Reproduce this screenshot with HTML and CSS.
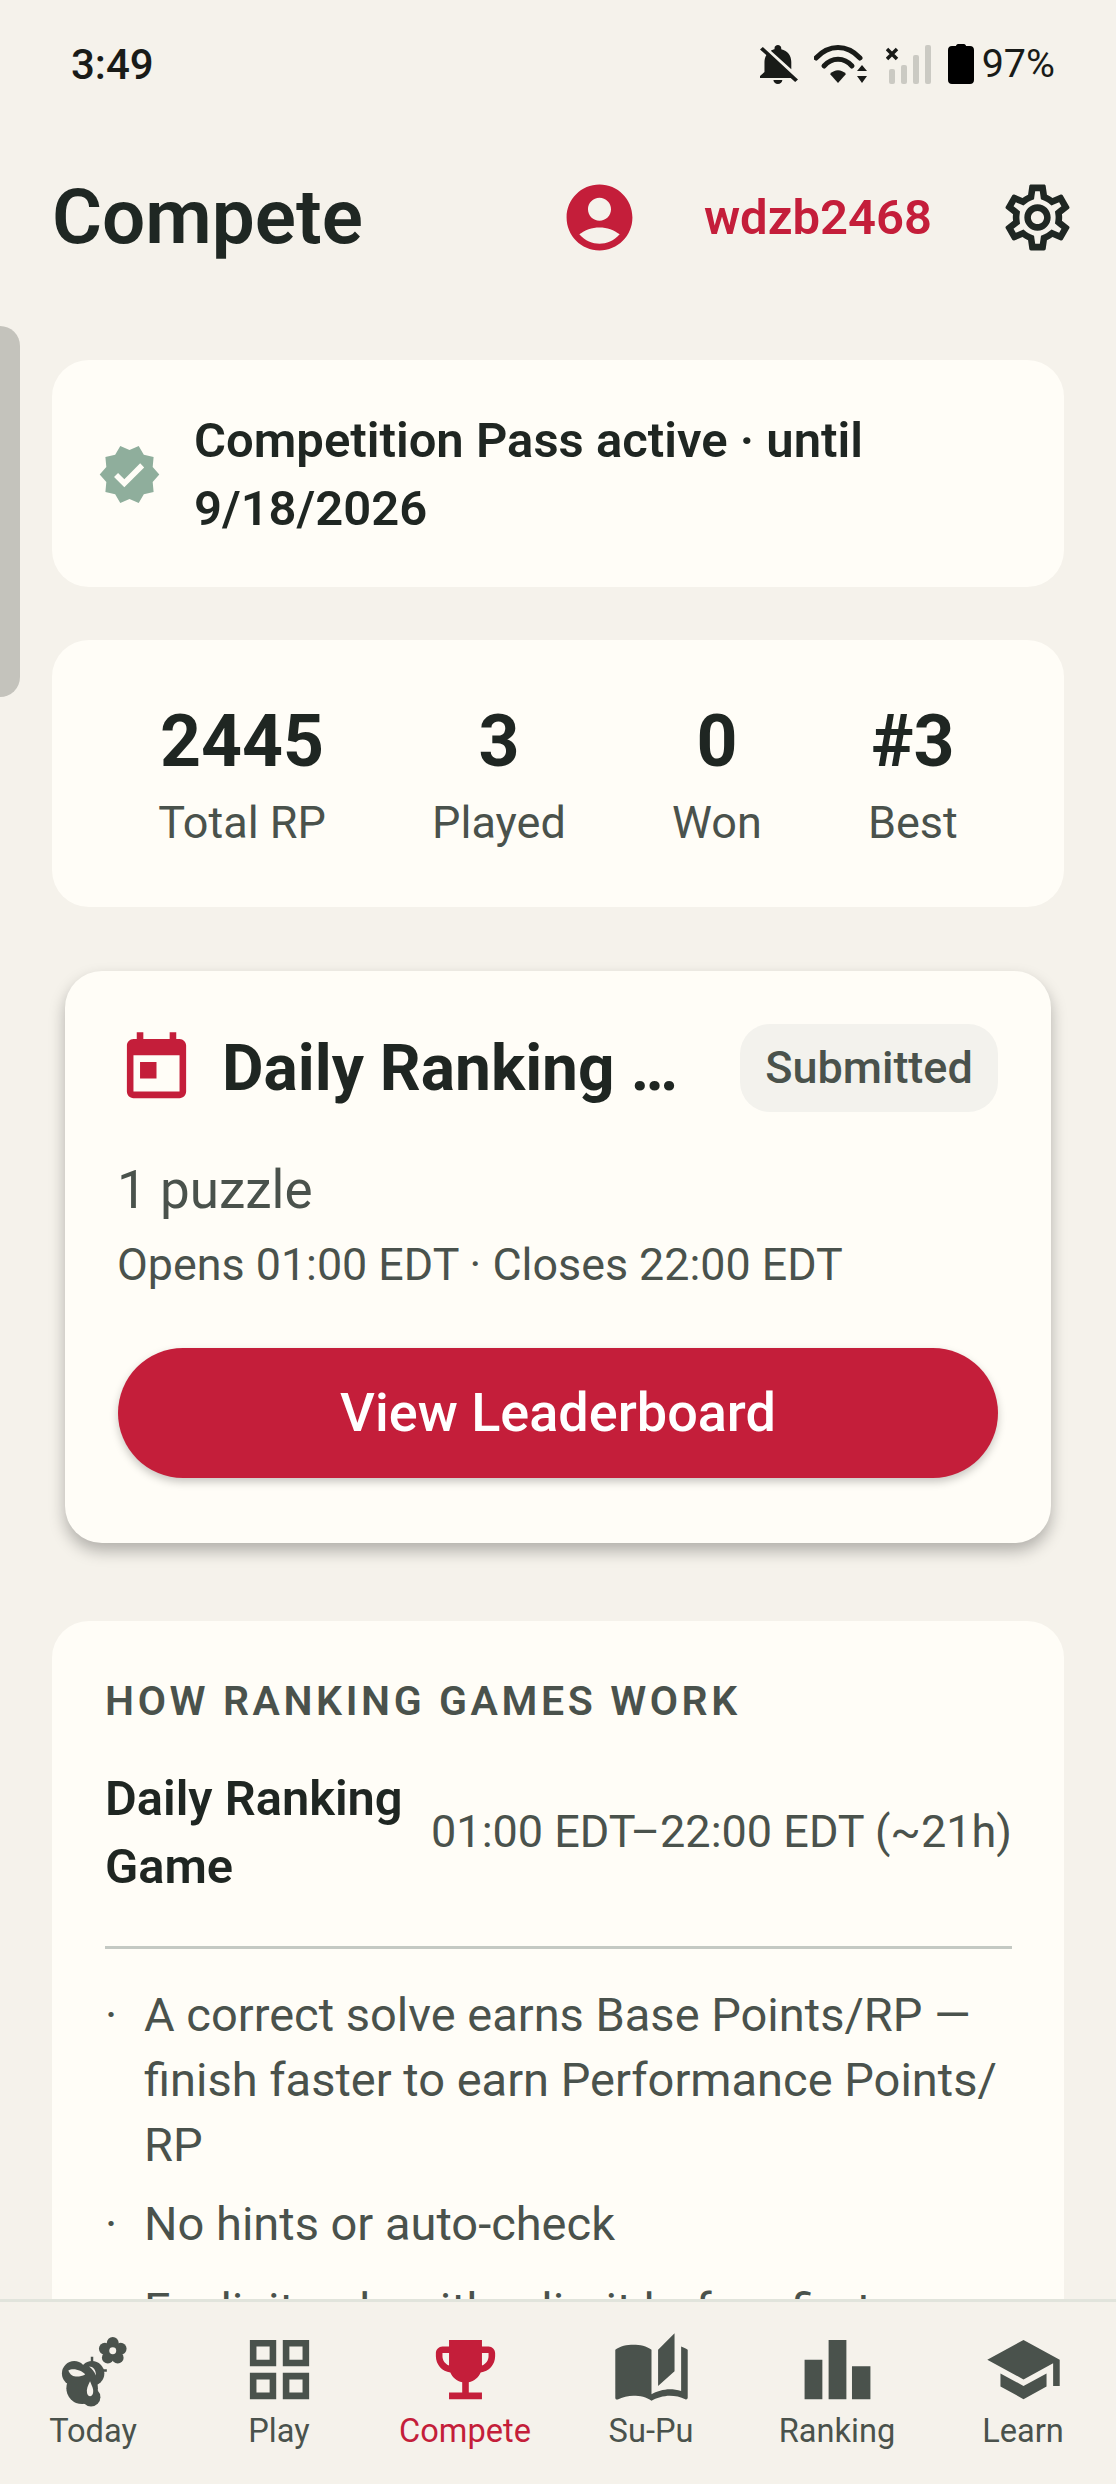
FILE: index.html
```html
<!DOCTYPE html>
<html>
<head lang="en">
    <meta charset="UTF-8">
    <title>Compete</title>
    <link rel="stylesheet" href="styles.css">
</head>
<body>
<div class="status-bar">
    <span class="clock">3:49</span>
    <div class="status-icons">
        <svg class="ic-bell" viewBox="4 2.500 17 19.500" preserveAspectRatio="none"><path d="M20 18.69L7.84 6.14 5.27 3.49 4 4.76l2.8 2.8v.01c-.52.99-.8 2.16-.8 3.42v5l-2 2v1h13.73l2 2L21 19.72l-1-1.03zM12 22c1.11 0 2-.89 2-2h-4c0 1.11.89 2 2 2zm6-7.32V11c0-3.08-1.64-5.64-4.5-6.32V4c0-.83-.67-1.5-1.5-1.5s-1.5.67-1.5 1.5v.68c-.15.03-.29.08-.42.12-.1.03-.2.07-.3.11h-.01c-.2.08-.4.17-.59.27-.11.05-.22.11-.33.18L18 14.68z"/></svg>
        <svg class="ic-wifi" viewBox="0 0 54 39">
            <path class="arc" d="M2 13C15 -1 33 -1 46 13"/>
            <path class="arc" d="M10 21C18 12 30 12 38 21"/>
            <path d="M16 29C21 24 27 24 32 29L24 38Z"/>
            <path d="M48 20L53 26H43ZM48 38L43 31H53Z"/>
        </svg>
        <svg class="ic-signal" viewBox="0 0 45 39">
            <path class="cross" d="M1 4L11 14M11 4L1 14"/>
            <rect class="bar" x="3" y="24" width="6" height="15" rx="2"/>
            <rect class="bar" x="15" y="20" width="6" height="19" rx="2"/>
            <rect class="bar" x="27" y="10" width="6" height="29" rx="2"/>
            <rect class="bar" x="39" y="0" width="6" height="39" rx="2"/>
        </svg>
        <svg class="ic-battery" viewBox="0 0 26 40"><path d="M8 2C8 1 9 0 10 0H16C17 0 18 1 18 2H22C24.500 2 26 3.500 26 6V36C26 38.500 24.500 40 22 40H4C1.500 40 0 38.500 0 36V6C0 3.500 1.500 2 4 2Z"/></svg>
        <span class="battery-text">97%</span>
    </div>
</div>

<div class="header">
    <h1 class="title">Compete</h1>
    <svg class="ic-account" viewBox="0 0 24 24"><path d="M12 2C6.48 2 2 6.48 2 12s4.48 10 10 10 10-4.48 10-10S17.52 2 12 2zm0 4c1.93 0 3.5 1.57 3.5 3.5S13.93 13 12 13s-3.5-1.57-3.5-3.5S10.07 6 12 6zm0 14c-2.03 0-4.43-.82-6.14-2.88C7.55 15.8 9.68 15 12 15s4.45.8 6.14 2.12C16.43 19.18 14.03 20 12 20z"/></svg>
    <span class="username">wdzb2468</span>
    <svg class="ic-settings" viewBox="0 0 24 24"><path d="M19.43 12.98c.04-.32.07-.64.07-.98 0-.34-.03-.66-.07-.98l2.11-1.65c.19-.15.24-.42.12-.64l-2-3.46c-.09-.16-.26-.25-.44-.25-.06 0-.12.01-.17.03l-2.49 1c-.52-.4-1.08-.73-1.69-.98l-.38-2.65C14.46 2.18 14.25 2 14 2h-4c-.25 0-.46.18-.49.42l-.38 2.65c-.61.25-1.17.59-1.69.98l-2.49-1c-.06-.02-.12-.03-.18-.03-.17 0-.34.09-.43.25l-2 3.46c-.13.22-.07.49.12.64l2.11 1.65c-.04.32-.07.65-.07.98 0 .33.03.66.07.98l-2.11 1.65c-.19.15-.24.42-.12.64l2 3.46c.09.16.26.25.44.25.06 0 .12-.01.17-.03l2.49-1c.52.4 1.08.73 1.69.98l.38 2.65c.03.24.24.42.49.42h4c.25 0 .46-.18.49-.42l.38-2.65c.61-.25 1.17-.59 1.69-.98l2.49 1c.06.02.12.03.18.03.17 0 .34-.09.43-.25l2-3.46c.12-.22.07-.49-.12-.64l-2.11-1.65zm-1.98-1.71c.04.31.05.52.05.73 0 .21-.02.43-.05.73l-.14 1.13.89.7 1.08.84-.7 1.21-1.27-.51-1.04-.42-.9.68c-.43.32-.84.56-1.25.73l-1.06.43-.16 1.13-.2 1.35h-1.4l-.19-1.35-.16-1.13-1.06-.43c-.43-.18-.83-.41-1.23-.71l-.91-.7-1.06.43-1.27.51-.7-1.21 1.08-.84.89-.7-.14-1.13c-.03-.31-.05-.54-.05-.74s.02-.43.05-.73l.14-1.13-.89-.7-1.08-.84.7-1.21 1.27.51 1.04.42.9-.68c.43-.32.84-.56 1.25-.73l1.06-.43.16-1.13.2-1.35h1.39l.19 1.35.16 1.13 1.06.43c.43.18.83.41 1.23.71l.91.7 1.06-.43 1.27-.51.7 1.21-1.07.85-.89.7.14 1.13zM12 8c-2.21 0-4 1.79-4 4s1.79 4 4 4 4-1.79 4-4-1.79-4-4-4zm0 6c-1.1 0-2-.9-2-2s.9-2 2-2 2 .9 2 2-.9 2-2 2z"/></svg>
</div>

<div class="content">
    <div class="scroll-handle"></div>

    <div class="card pass-card">
        <svg class="ic-verified" viewBox="0 0 24 24"><path d="M23 12l-2.44-2.79.34-3.69-3.61-.82-1.89-3.2L12 2.96 8.6 1.5 6.71 4.69 3.1 5.5l.34 3.7L1 12l2.44 2.79-.34 3.7 3.61.82L8.6 22.5l3.4-1.47 3.4 1.46 1.89-3.19 3.61-.82-.34-3.69L23 12zm-12.91 4.72l-3.8-3.81 1.48-1.48 2.32 2.33 5.85-5.87 1.48 1.48-7.33 7.35z"/></svg>
        <div class="pass-text">Competition Pass active · until 9/18/2026</div>
    </div>

    <div class="card stats-card">
        <div class="stat"><div class="stat-num">2445</div><div class="stat-label">Total RP</div></div>
        <div class="stat"><div class="stat-num">3</div><div class="stat-label">Played</div></div>
        <div class="stat"><div class="stat-num">0</div><div class="stat-label">Won</div></div>
        <div class="stat"><div class="stat-num">#3</div><div class="stat-label">Best</div></div>
    </div>

    <div class="card daily-card">
        <div class="daily-head">
            <svg class="ic-today" viewBox="0 0 24 24"><path d="M19 3h-1V1h-2v2H8V1H6v2H5c-1.11 0-1.99.9-1.99 2L3 19c0 1.1.89 2 2 2h14c1.1 0 2-.9 2-2V5c0-1.1-.9-2-2-2zm0 16H5V8h14v11zM7 10h5v5H7z"/></svg>
            <div class="daily-title">Daily Ranking Game</div>
            <span class="pill">Submitted</span>
        </div>
        <div class="puzzle-count">1 puzzle</div>
        <div class="daily-hours">Opens 01:00 EDT · Closes 22:00 EDT</div>
        <div class="btn-primary">View Leaderboard</div>
    </div>

    <div class="card how-card">
        <div class="how-title">HOW RANKING GAMES WORK</div>
        <div class="how-row">
            <div class="how-name">Daily Ranking Game</div>
            <div class="how-time">01:00 EDT–22:00 EDT (~21h)</div>
        </div>
        <ul class="how-list">
            <li><span class="dot">·</span><span>A correct solve earns Base Points/RP — finish faster to earn Performance Points/<br>RP</span></li>
            <li class="gap-after"><span class="dot">·</span><span>No hints or auto-check</span></li>
            <li><span class="dot">·</span><span>Explicit only with a limit before first</span></li>
        </ul>
    </div>
</div>

<div class="tabbar">
    <div class="tab">
        <svg class="tab-bee" viewBox="0 0 85 80">
            <circle cx="62" cy="13" r="6"/><circle cx="70" cy="19" r="6"/><circle cx="67" cy="28" r="6"/><circle cx="57" cy="28" r="6"/><circle cx="54" cy="19" r="6"/>
            <circle cx="62" cy="21" r="6"/>
            <circle class="hole" cx="62" cy="21" r="3.500"/>
            <path class="feeler" d="M41 27V33M49 41H56"/>
            <circle cx="23" cy="44" r="12.500"/><circle cx="41" cy="44" r="12.500"/><circle cx="31" cy="59" r="16"/><circle cx="40" cy="68" r="9.500"/>
            <path class="hole" d="M17 41C22 38 31 41 34 45C28 48 20 49 17 41Z"/>
            <path class="hole" d="M39 52C41 57 43 60 42 64C41 68 37 68 36 64C35 60 37 56 39 52Z"/>
            <path class="hole" d="M38 37C42 37 45 40 45 46C43 42 41 39 38 37Z"/>
        </svg>
        <span>Today</span>
    </div>
    <div class="tab">
        <svg class="tab-ic" viewBox="0 0 24 24"><path d="M3 3v8h8V3H3zm6 6H5V5h4v4zm-6 4v8h8v-8H3zm6 6H5v-4h4v4zm4-16v8h8V3h-8zm6 6h-4V5h4v4zm-6 4v8h8v-8h-8zm6 6h-4v-4h4v4z"/></svg>
        <span>Play</span>
    </div>
    <div class="tab active">
        <svg class="tab-ic" viewBox="0 0 24 24"><path d="M19 5h-2V3H7v2H5c-1.100 0-2 .9-2 2v1c0 2.550 1.920 4.630 4.390 4.940.63 1.500 1.980 2.630 3.610 2.960V19H7v2h10v-2h-4v-3.100c1.630-.33 2.980-1.460 3.610-2.960C19.080 12.630 21 10.550 21 8V7c0-1.100-.9-2-2-2zM5 8V7h2v3.820C5.840 10.400 5 9.300 5 8zm14 0c0 1.300-.84 2.400-2 2.820V7h2v1z"/></svg>
        <span>Compete</span>
    </div>
    <div class="tab">
        <svg class="tab-ic" viewBox="0 0 24 24"><path d="M19 1l-5 5v11l5-4.500V1zM1 6v14.650c0 .25.25.5.5.5.1 0 .15-.05.25-.05C3.100 20.450 5.050 20 6.500 20c1.950 0 4.050.4 5.500 1.500 1.350-.85 3.800-1.500 5.500-1.500 1.650 0 3.350.3 4.750 1.050.1.05.15.05.25.05.25 0 .5-.25.5-.5V6c-.6-.45-1.250-.75-2-1v13.500c-1.100-.35-2.300-.5-3.500-.5-1.700 0-4.150.65-5.500 1.500V6c-1.450-1.100-3.550-1.500-5.500-1.500S2.450 4.900 1 6z"/></svg>
        <span>Su-Pu</span>
    </div>
    <div class="tab">
        <svg class="tab-ic" viewBox="0 0 24 24"><path d="M2 9h5.400v12H2zM9.300 3h5.400v18H9.300zM16.400 11H22v10h-5.600z"/></svg>
        <span>Ranking</span>
    </div>
    <div class="tab">
        <svg class="tab-ic" viewBox="0 0 24 24"><path d="M5 13.180v4L12 21l7-3.820v-4L12 17l-7-3.820zM12 3L1 9l11 6 9-4.910V17h2V9L12 3z"/></svg>
        <span>Learn</span>
    </div>
</div>
</body>
</html>
```

FILE: styles.css
```css
* {
    margin: 0;
    padding: 0;
    box-sizing: border-box;
}

ul {
    list-style: none;
}

html, body {
    width: 1116px;
    height: 2484px;
    overflow: hidden;
}

body {
    display: flex;
    flex-direction: column;
    background-color: #f5f2eb;
    color: #1f2622;
    font-family: Roboto, "Noto Sans", sans-serif;
}

/* status bar */
.status-bar {
    display: flex;
    justify-content: space-between;
    align-items: center;
    flex: none;
    height: 128px;
    padding: 0 61px 0 71px;
}

.clock {
    font-size: 42px;
    font-weight: 500;
    color: #191b18;
}

.status-icons {
    display: flex;
    align-items: center;
    color: #191b18;
}

.ic-bell {
    width: 38px;
    height: 39px;
    margin-right: 16px;
    fill: #191b18;
}

.ic-wifi {
    width: 54px;
    height: 39px;
    margin-right: 18px;
    fill: #191b18;
}

.ic-wifi .arc {
    fill: none;
    stroke: #191b18;
    stroke-width: 5;
    stroke-linecap: round;
}

.ic-signal {
    width: 45px;
    height: 39px;
    margin-right: 17px;
}

.ic-signal .cross {
    fill: none;
    stroke: #191b18;
    stroke-width: 3.500;
}

.ic-signal .bar {
    fill: #cbcac3;
}

.ic-battery {
    width: 26px;
    height: 40px;
    margin-right: 8px;
    fill: #000;
}

.battery-text {
    font-size: 39.500px;
    font-weight: 400;
    line-height: 40px;
}

/* header */
.header {
    display: flex;
    align-items: center;
    flex: none;
    height: 178px;
    padding: 0 39px 0 52px;
}

.title {
    flex: 1;
    font-size: 76.500px;
    font-weight: 600;
    line-height: 88px;
    color: #1f2723;
}

.ic-account {
    width: 79px;
    height: 79px;
    fill: #c41e3a;
}

.username {
    margin: 0 66px 0 65px;
    font-size: 49px;
    font-weight: 600;
    color: #c41e3a;
}

.ic-settings {
    width: 79px;
    height: 79px;
    fill: #1f2723;
}

/* scrolling part */
.content {
    position: relative;
    flex: 1;
    min-height: 0;
    overflow: hidden;
    padding: 54px 52px 0;
}

.scroll-handle {
    position: absolute;
    left: 0;
    top: 20px;
    width: 20px;
    height: 371px;
    border-radius: 0 24px 24px 0;
    background-color: #c4c3bc;
}

.card {
    border-radius: 37px;
    background-color: #fffdf7;
}

.pass-card {
    display: flex;
    align-items: center;
    height: 227px;
    margin-bottom: 53px;
    padding: 2px 40px 0 45px;
}

.ic-verified {
    flex: none;
    width: 65px;
    height: 65px;
    margin-right: 32px;
    fill: #8fae9c;
}

.pass-text {
    font-size: 49px;
    font-weight: 600;
    line-height: 68px;
}

.stats-card {
    display: flex;
    justify-content: space-evenly;
    height: 267px;
    margin-bottom: 64px;
    padding-top: 60px;
}

.stat {
    text-align: center;
}

.stat-num {
    font-size: 71.500px;
    font-weight: 700;
    line-height: 84px;
}

.stat-label {
    margin-top: 9px;
    font-size: 45px;
    line-height: 60px;
    color: #4a524c;
}

.daily-card {
    height: 572px;
    margin: 0 13px 78px;
    padding: 53px 53px 0 52px;
    box-shadow: 0 8px 16px rgba(0, 0, 0, 0.28);
}

.daily-head {
    display: flex;
    align-items: center;
    height: 88px;
}

.ic-today {
    flex: none;
    width: 79px;
    height: 79px;
    margin-right: 26px;
    fill: #c41e3a;
}

.daily-title {
    flex: 1;
    min-width: 0;
    margin-right: 26px;
    overflow: hidden;
    white-space: nowrap;
    text-overflow: ellipsis;
    font-size: 64px;
    font-weight: 700;
}

.pill {
    flex: none;
    width: 258px;
    height: 88px;
    border-radius: 30px;
    background-color: #f3f2ed;
    text-align: center;
    font-size: 45px;
    font-weight: 500;
    line-height: 88px;
    color: #4a524c;
}

.puzzle-count {
    margin-top: 42px;
    font-size: 53px;
    line-height: 72px;
    color: #4a524c;
}

.daily-hours {
    margin-top: 6px;
    font-size: 44.800px;
    line-height: 66px;
    color: #4a524c;
}

.btn-primary {
    height: 130px;
    margin: 50px 0 0 1px;
    border-radius: 65px;
    background-color: #c41e3a;
    box-shadow: 0 4px 8px rgba(0, 0, 0, 0.22);
    text-align: center;
    font-size: 54px;
    font-weight: 500;
    line-height: 130px;
    color: #fff;
}

.how-card {
    padding: 55px 52px 60px 53px;
}

.how-title {
    font-size: 41px;
    font-weight: 600;
    line-height: 50px;
    letter-spacing: 3.600px;
    color: #4a524c;
}

.how-row {
    display: flex;
    align-items: center;
    margin-top: 39px;
    padding-bottom: 45px;
    border-bottom: 3px solid #c4c9c3;
}

.how-name {
    flex: 1;
    min-width: 0;
    font-size: 48.800px;
    font-weight: 600;
    line-height: 68px;
}

.how-time {
    flex: none;
    margin-left: 22px;
    padding-bottom: 4px;
    font-size: 45px;
    color: #4a524c;
}

.how-list {
    margin-top: 33px;
    font-size: 47px;
    line-height: 65px;
    color: #4a524c;
}

.how-list li {
    display: flex;
    margin-bottom: 14px;
}

.how-list .gap-after {
    margin-bottom: 21px;
}

.how-list .dot {
    flex: none;
    width: 39px;
}

/* bottom tabs */
.tabbar {
    display: grid;
    grid-template-columns: repeat(6, 186px);
    flex: none;
    height: 185px;
    padding-top: 28px;
    border-top: 3px solid #e1e4dc;
    background-color: #f5f2eb;
}

.tab {
    display: flex;
    flex-direction: column;
    align-items: center;
    font-size: 32.600px;
    line-height: 44px;
    color: #4a524c;
}

.tab svg {
    flex: none;
    fill: #4a524c;
}

.tab-ic {
    width: 79px;
    height: 79px;
}

.tab-bee {
    width: 85px;
    height: 79px;
}

.tab-bee .hole {
    fill: #f5f2eb;
}

.tab-bee .feeler {
    fill: none;
    stroke: #4a524c;
    stroke-width: 2.500;
}

.tab.active {
    color: #c41e3a;
}

.tab.active svg {
    fill: #c41e3a;
}
```
